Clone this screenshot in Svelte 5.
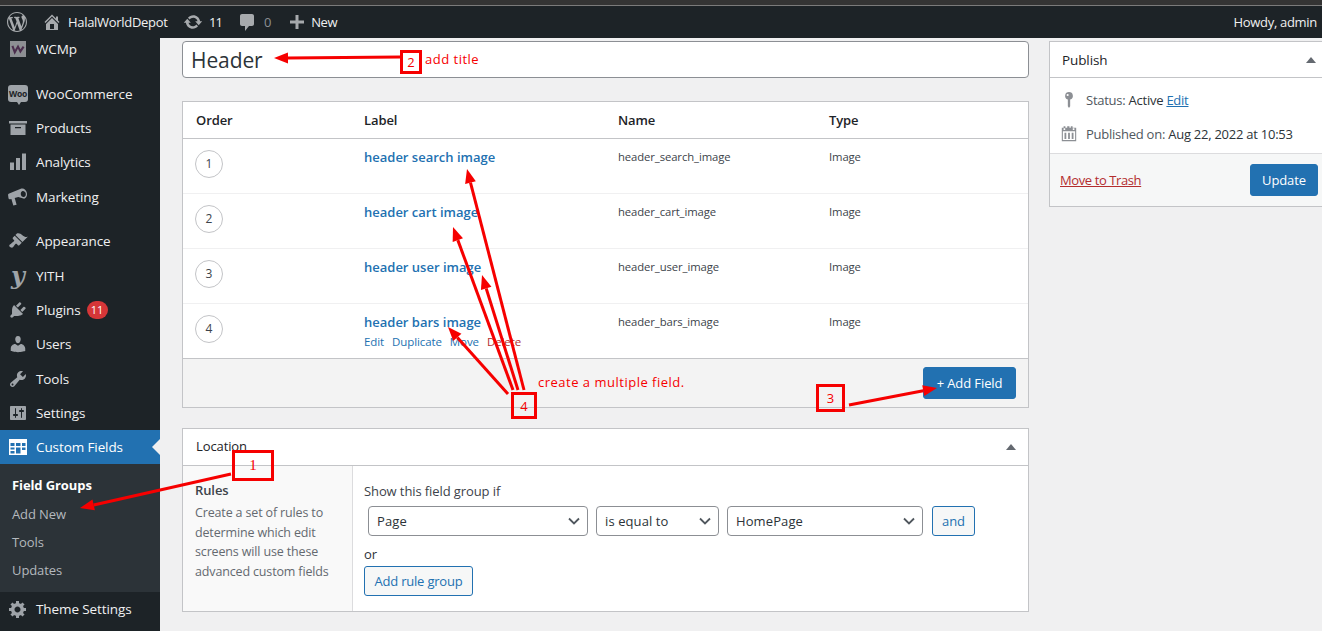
<script>
  const P = {
    wp: "M20 10c0-5.51-4.49-10-10-10C4.48 0 0 4.49 0 10c0 5.52 4.48 10 10 10 5.51 0 10-4.48 10-10zM7.78 15.37L4.37 6.22c.55-.02 1.17-.08 1.17-.08.5-.06.44-1.13-.06-1.11 0 0-1.45.11-2.37.11-.18 0-.37 0-.58-.01C4.12 2.69 6.87 1.11 10 1.11c2.33 0 4.45.87 6.05 2.34-.68-.11-1.65.39-1.65 1.58 0 .74.45 1.36.9 2.1.35.61.55 1.36.55 2.46 0 1.49-1.4 5-1.4 5l-3.03-8.37c.54-.02.82-.17.82-.17.5-.05.44-1.25-.06-1.22 0 0-1.44.12-2.38.12-.87 0-2.33-.12-2.33-.12-.5-.03-.56 1.2-.06 1.22l.92.08 1.26 3.41zM17.41 10c.24-.64.74-1.87.43-4.25.7 1.29 1.05 2.71 1.05 4.25 0 3.29-1.73 6.24-4.4 7.78.97-2.59 1.94-5.2 2.92-7.78zM6.1 18.09C3.12 16.65 1.11 13.53 1.11 10c0-1.3.23-2.48.72-3.59C3.25 10.3 4.67 14.2 6.1 18.09zm4.03-6.63l2.58 6.98c-.86.29-1.76.45-2.71.45-.79 0-1.57-.11-2.29-.33.81-2.38 1.62-4.74 2.42-7.1z",
    home: "M16 8.5l1.53 1.53-1.06 1.06L10 4.62l-6.47 6.47-1.06-1.06L10 2.5l4 4v-2h2v4zm-6-2.46l6 5.99V18H4v-5.97zM12 17v-5H8v5h4z",
    update: "M10.2 3.28c3.53 0 6.43 2.61 6.92 6h2.08l-3.5 4-3.5-4h2.32c-.45-1.97-2.21-3.45-4.32-3.45-1.45 0-2.73.71-3.54 1.78L4.95 5.66C6.23 4.2 8.11 3.28 10.2 3.28zm-.4 13.44c-3.52 0-6.43-2.61-6.92-6H.8l3.5-4c1.17 1.33 2.33 2.67 3.5 4H5.48c.45 1.97 2.21 3.45 4.32 3.45 1.45 0 2.73-.71 3.54-1.78l1.71 1.95c-1.28 1.46-3.15 2.38-5.25 2.38z",
    comment: "M5 2h10c1.1 0 2 .9 2 2v8c0 1.1-.9 2-2 2h-3l-4 5v-5H5c-1.1 0-2-.9-2-2V4c0-1.1.9-2 2-2z",
    plus: "M17 8.5v3h-5.5V17h-3v-5.5H3v-3h5.5V3h3v5.5H17z",
    archive: "M1 3h18v2.5H1zM2.500 6.500h15V17h-15zM7 9v1.200h6V9z",
    bars: "M14 1.500h4V18h-4zM8 6h4v12H8zM2 10.500h4V18H2z",
    mega: "M13.400 1.600c2.400-.7 4.700 1.200 5.400 4 .7 2.800-.3 5.500-2.600 6.200l-5.900-1.700-3.600 1 1.900 6.600-3.300.9-1.900-6.600-1.100.3c-.8.2-1.600-.3-1.800-1.100L.1 8.200c-.2-.8.3-1.600 1.100-1.800zM14.500 4.100c-1.300.4-2 2-1.600 3.600.4 1.600 1.900 2.600 3.200 2.200 1.300-.4 2-2 1.600-3.600-.4-1.600-1.900-2.600-3.200-2.200z",
    brush: "M14.48 11.060L7.410 3.990l1.500-1.500c.5-.56 2.300-.47 3.510.32 1.210.8 1.430 1.280 2.910 2.100 1.180.64 2.450 1.260 4.450.85zm-.71.71L6.700 4.700 4.930 6.470c-.39.39-.39 1.020 0 1.410l1.060 1.060c.39.39.39 1.030 0 1.420-.6.6-1.430 1.110-2.210 1.690-.35.26-.7.53-1.010.84C1.430 13.230.9 14.500 1.530 15.500c.63 1 2.620 1.600 3.380.84.31-.31.58-.66.84-1.010.58-.78 1.090-1.610 1.690-2.210.39-.39 1.020-.39 1.410 0l1.060 1.060c.39.39 1.020.39 1.410 0z",
    plugin: "M13.110 4.360L9.870 7.600 8 5.730l3.240-3.240c.35-.34 1.050-.2 1.560.32.52.51.66 1.210.31 1.550zm-8 1.770l.91-1.120 9.010 9.010-1.190.84c-.71.71-2.630 1.160-3.820 1.160H6.140L4.900 17.260c-.59.59-1.540.59-2.120 0-.59-.58-.59-1.530 0-2.120l1.240-1.240v-3.880c0-1.130.4-3.190 1.090-3.890zm7.260 3.970l3.240-3.240c.34-.35 1.040-.21 1.550.31.52.51.66 1.210.31 1.550l-3.240 3.250z",
    user: "M10 9.250c-2.270 0-2.730-3.440-2.730-3.440C7 4.020 7.820 2 9.970 2c2.160 0 2.980 2.020 2.710 3.810 0 0-.41 3.440-2.680 3.440zm0 2.570L12.720 10c2.390 0 4.520 2.330 4.520 4.530v2.490s-3.650 1.130-7.240 1.130c-3.650 0-7.240-1.130-7.240-1.130v-2.490c0-2.250 1.940-4.480 4.470-4.480z",
    tools: "M16.680 9.770c-1.340 1.340-3.300 1.670-4.950.99l-5.410 6.520c-.99.99-2.590.99-3.580 0s-.99-2.590 0-3.570l6.520-5.420c-.68-1.650-.35-3.610.99-4.950 1.280-1.280 3.120-1.620 4.720-1.060l-2.890 2.890 2.820 2.820 2.860-2.870c.53 1.580.18 3.390-1.080 4.670zM3.810 16.210c.4.39 1.040.39 1.430 0 .4-.4.4-1.040 0-1.430-.39-.4-1.030-.4-1.430 0-.39.39-.39 1.030 0 1.430z",
    sliders: "M18 16V4c0-.55-.45-1-1-1H3c-.55 0-1 .45-1 1v12c0 .55.45 1 1 1h14c.55 0 1-.45 1-1zM8 11h1c.55 0 1 .45 1 1s-.45 1-1 1H8v1.500c0 .28-.22.5-.5.5s-.5-.22-.5-.5V13H6c-.55 0-1-.45-1-1s.45-1 1-1h1V5.500c0-.28.22-.5.5-.5s.5.22.5.5V11zm5-2h-1c-.55 0-1-.45-1-1s.45-1 1-1h1V5.500c0-.28.22-.5.5-.5s.5.22.5.5V7h1c.55 0 1 .45 1 1s-.45 1-1 1h-1v5.500c0 .28-.22.5-.5.5s-.5-.22-.5-.5V9z",
    gear: "M18 12h-2.180c-.17.7-.44 1.350-.81 1.930l1.540 1.540-2.100 2.100-1.540-1.540c-.58.36-1.230.63-1.910.79V19H8v-2.180c-.68-.16-1.330-.43-1.910-.79l-1.540 1.540-2.120-2.120 1.540-1.540c-.36-.58-.63-1.230-.79-1.910H1V9.030h2.170c.16-.7.44-1.350.8-1.940L2.430 5.550l2.100-2.100 1.540 1.540c.58-.37 1.240-.64 1.930-.81V2h3v2.180c.68.16 1.330.43 1.910.79l1.540-1.540 2.120 2.120-1.540 1.540c.36.59.64 1.240.8 1.940H18V12zm-8.500 1.500c1.660 0 3-1.340 3-3s-1.340-3-3-3-3 1.340-3 3 1.340 3 3 3z",
    table: "M1 2h18v16H1zM2.500 6v3h4V6zM8 6v3h4.500V6zM14 6v3h3.500V6zM2.500 10.500v2h4v-2zM2.500 14v2.500h4V14zM8 10.500v6h4.500v-6zM14 10.500v2.500h3.500v-2.500z",
    pin: "M10 1a4.300 4.300 0 0 1 1.300 8.400V17l-1.300 2-1.300-2V9.400A4.300 4.300 0 0 1 10 1zM8.500 3.200a1.200 1.200 0 1 0 0 2.400 1.200 1.200 0 0 0 0-2.400z",
    cal: "M4 1.500h2V3h2V1.500h2.500V3h1.500V1.500h2V3H18v15H2V3h2zM3.200 7v9.800h13.600V7zM5 8.500h2v7H5zM9 8.500h2v7H9zM13 8.500h2v7h-2zM4 3.500v2h1.800v-2zM14.200 3.500v2H16v-2z"
  };

  const menuA = [
    { label: 'WooCommerce', kind: 'woo' },
    { label: 'Products', d: P.archive },
    { label: 'Analytics', d: P.bars },
    { label: 'Marketing', d: P.mega }
  ];
  const menuB = [
    { label: 'Appearance', d: P.brush },
    { label: 'YITH', kind: 'yith' },
    { label: 'Plugins', d: P.plugin, badge: '11' },
    { label: 'Users', d: P.user },
    { label: 'Tools', d: P.tools },
    { label: 'Settings', d: P.sliders }
  ];
  const rows = [
    { n: 1, label: 'header search image', name: 'header_search_image' },
    { n: 2, label: 'header cart image', name: 'header_cart_image' },
    { n: 3, label: 'header user image', name: 'header_user_image' },
    { n: 4, label: 'header bars image', name: 'header_bars_image', actions: true }
  ];

  function arrow(x1, y1, x2, y2, len = 14, half = 5.5) {
    const dx = x2 - x1, dy = y2 - y1, l = Math.hypot(dx, dy);
    const ux = dx / l, uy = dy / l;
    const bx = x2 - ux * len, by = y2 - uy * len;
    return {
      x1, y1, x2: bx, y2: by,
      head: `${x2},${y2} ${bx - uy * half},${by + ux * half} ${bx + uy * half},${by - ux * half}`
    };
  }
  const arrows = [
    arrow(400, 57, 274, 58),
    arrow(231, 474, 80, 508),
    arrow(849, 405, 937, 388),
    arrow(508, 394, 448, 327),
    arrow(513, 390, 453, 227),
    arrow(518, 390, 482, 275),
    arrow(524, 390, 467, 169)
  ];
</script>

{#snippet icon(d, cls = 'ico')}
  <svg class={cls} viewBox="0 0 20 20" aria-hidden="true"><path {d} fill-rule="evenodd" /></svg>
{/snippet}

{#snippet menuRow(item)}
  <div class="mrow">
    <span class="mico">
      {#if item.kind === 'woo'}
        <span class="woo">Woo</span>
      {:else if item.kind === 'yith'}
        <span class="yith">y</span>
      {:else}
        {@render icon(item.d)}
      {/if}
    </span>
    <span>{item.label}</span>
    {#if item.badge}<span class="badge">{item.badge}</span>{/if}
  </div>
{/snippet}

{#snippet chevron()}
  <svg class="chev" viewBox="0 0 12 8" aria-hidden="true"><path d="M1 1.500l5 5 5-5" /></svg>
{/snippet}

<div class="page">
  <div class="chrome"></div>
  <header class="bar">
    <div class="bi wp">{@render icon(P.wp, 'wpi')}</div>
    <div class="bi site">{@render icon(P.home, 'bico')}<span>HalalWorldDepot</span></div>
    <div class="bi upd">{@render icon(P.update, 'bico')}<span class="tight">11</span></div>
    <div class="bi com">{@render icon(P.comment, 'bico')}<span class="dim">0</span></div>
    <div class="bi new">{@render icon(P.plus, 'bico')}<span>New</span></div>
    <div class="howdy">Howdy, admin</div>
  </header>

  <div class="body">
    <nav class="side">
      <div class="mrow first">
        <span class="mico"><svg class="wcmp" viewBox="0 0 20 20" aria-hidden="true"><rect width="20" height="20" fill="#8d8f93"/><path d="M3 6l3 8 4-7 3 6 4-6" fill="none" stroke="#4b2d4d" stroke-width="2.600"/></svg></span>
        <span>WCMp</span>
      </div>
      <div class="sep s-a"></div>
      {#each menuA as item}{@render menuRow(item)}{/each}
      <div class="sep s-b"></div>
      {#each menuB as item}{@render menuRow(item)}{/each}
      <div class="mrow current">
        <span class="mico">{@render icon(P.table, 'ico white')}</span>
        <span>Custom Fields</span>
        <span class="notch"></span>
      </div>
      <div class="sub">
        <div class="strong">Field Groups</div>
        <div>Add New</div>
        <div>Tools</div>
        <div>Updates</div>
      </div>
      <div class="mrow">
        <span class="mico">{@render icon(P.gear)}</span>
        <span>Theme Settings</span>
      </div>
    </nav>

    <main class="main">
      <div class="col">
        <div class="title">Header</div>

        <section class="fields">
          <div class="thead grid">
            <div>Order</div><div>Label</div><div>Name</div><div>Type</div>
          </div>
          {#each rows as r}
            <div class="row grid">
              <div><span class="circle">{r.n}</span></div>
              <div class="lab">
                <div class="link">{r.label}</div>
                {#if r.actions}
                  <div class="acts"><span>Edit</span><span>Duplicate</span><span>Move</span><span class="del">Delete</span></div>
                {/if}
              </div>
              <div class="small">{r.name}</div>
              <div class="small">Image</div>
            </div>
          {/each}
          <div class="foot"><span class="btn primary addf">+ Add Field</span></div>
        </section>

        <section class="loc">
          <div class="lhead"><span>Location</span><span class="tri"></span></div>
          <div class="lbody">
            <div class="rules">
              <div class="rt">Rules</div>
              <p>Create a set of rules to determine which edit screens will use these advanced custom fields</p>
            </div>
            <div class="cond">
              <div class="show">Show this field group if</div>
              <div class="sels">
                <div class="sel s1"><span>Page</span>{@render chevron()}</div>
                <div class="sel s2"><span>is equal to</span>{@render chevron()}</div>
                <div class="sel s3"><span>HomePage</span>{@render chevron()}</div>
                <span class="btn ghost and">and</span>
              </div>
              <div class="or">or</div>
              <span class="btn ghost arg">Add rule group</span>
            </div>
          </div>
        </section>
      </div>

      <aside class="pub">
        <div class="phead"><span>Publish</span><span class="tri"></span></div>
        <div class="pbody">
          <div class="pline">{@render icon(P.pin, 'pico')}<span>Status: <b>Active</b> <u class="edit">Edit</u></span></div>
          <div class="pline">{@render icon(P.cal, 'pico')}<span>Published on: <b>Aug 22, 2022 at 10:53</b></span></div>
        </div>
        <div class="pfoot"><u class="trash">Move to Trash</u><span class="btn primary up">Update</span></div>
      </aside>
    </main>
  </div>

  <svg class="marks" viewBox="0 0 1322 631" aria-hidden="true">
    {#each arrows as a}
      <line x1={a.x1} y1={a.y1} x2={a.x2} y2={a.y2} />
      <polygon points={a.head} />
    {/each}
  </svg>
  <div class="note n1">1</div>
  <div class="note n2">2</div>
  <div class="note n3">3</div>
  <div class="note n4">4</div>
  <div class="say t2">add title</div>
  <div class="say t4">create a multiple field.</div>
</div>

<style>
  :global(body) { margin: 0; background: #f0f0f1; overflow: hidden; }
  .page {
    position: relative; width: 1322px; height: 631px; overflow: hidden;
    display: flex; flex-direction: column; background: #f0f0f1;
    font-family: "Open Sans", "Noto Sans", sans-serif; font-size: 13px; color: #3c434a;
    letter-spacing: -0.1px;
  }
  .chrome { height: 5px; background: #343434; border-bottom: 1px solid #7b7b7b; flex: none; }
  .bar { height: 32px; flex: none; background: #1d2327; color: #f0f0f1; display: flex; align-items: center; letter-spacing: -0.3px; }
  .bi { display: flex; align-items: center; }
  .wp { margin-left: 7px; }
  .site { margin-left: 15px; gap: 6px; }
  .upd { margin-left: 15px; gap: 6.500px; }
  .tight { letter-spacing: -1px; }
  .com { margin-left: 15px; gap: 7px; }
  .new { margin-left: 16px; gap: 4px; }
  .dim { color: #8c8f94; }
  .wpi { width: 20px; height: 20px; fill: #a7aaad; }
  .bico { width: 20px; height: 20px; fill: #a7aaad; }
  .howdy { margin-left: auto; margin-right: 5px; }

  .body { flex: 1; display: flex; min-height: 0; }
  .side { width: 160px; flex: none; background: #1d2327; color: #f0f0f1; font-size: 13.500px; overflow: hidden; }
  .mrow { height: 34.330px; display: flex; align-items: center; position: relative; }
  .mrow.first { margin-top: -6.600px; }
  .sep { height: 10.700px; }
  .s-a { height: 10.900px; }
  .s-b { height: 10.100px; }
  .mico { width: 36px; flex: none; display: flex; justify-content: center; }
  .ico { width: 20px; height: 20px; fill: #9ea3a8; }
  .ico.white { fill: #fff; }
  .wcmp { width: 16px; height: 16px; }
  .woo {
    position: relative; width: 20px; height: 17px; background: #9ea3a8; border-radius: 3px; color: #1d2327;
    font-size: 8.500px; font-weight: 700; line-height: 17px; text-align: center; letter-spacing: -0.3px;
  }
  .woo::after {
    content: ""; position: absolute; left: 9px; bottom: -3px; width: 0; height: 0;
    border-left: 2px solid transparent; border-right: 2px solid transparent; border-top: 3px solid #9ea3a8;
  }
  .yith { font-family: "DejaVu Serif", serif; font-style: italic; font-weight: 700; font-size: 24px; line-height: 20px; color: #9ea3a8; }
  .badge {
    margin-left: 6px; min-width: 21px; height: 18px; border-radius: 9px; background: #d63638; color: #fff;
    font-size: 11px; line-height: 18px; text-align: center;
  }
  .current { background: #2271b1; color: #fff; }
  .notch {
    position: absolute; right: 0; top: 50%; margin-top: -8px; width: 0; height: 0;
    border: 8px solid transparent; border-right-color: #f0f0f1;
  }
  .sub { background: #2c3338; padding: 7px 0 7.500px 12px; color: #b4b9be; font-size: 13px; }
  .sub div { height: 28.330px; line-height: 28.330px; }
  .sub .strong { color: #fff; font-weight: 700; }

  .main { flex: 1; display: flex; min-width: 0; padding: 3px 0 0 22px; gap: 20px; }
  .col { width: 847px; flex: none; }
  .title {
    box-sizing: border-box; height: 37px; background: #fff; border: 1px solid #8c8f94; border-radius: 4px;
    padding: 0 8px; font-size: 21px; line-height: 37px; color: #2c3338; letter-spacing: -0.1px;
  }
  .fields { margin-top: 23px; background: #fff; border: 1px solid #c3c4c7; }
  .grid { display: grid; grid-template-columns: 168px 254px 211px 1fr; padding-left: 13px; }
  .thead { height: 36px; align-items: center; border-bottom: 1px solid #c3c4c7; font-weight: 600; color: #1d2327; }
  .row { height: 55px; box-sizing: border-box; padding-top: 10px; border-bottom: 1px solid #f0f0f1; }
  .row:nth-last-child(2) { border-bottom: 1px solid #c3c4c7; }
  .circle {
    display: block; box-sizing: border-box; width: 28px; height: 28px; border: 1px solid #c3c4c7; border-radius: 50%;
    text-align: center; line-height: 26px; font-size: 12px; margin: 1px 0 0 -1px;
  }
  .link { color: #2271b1; font-weight: 600; line-height: 16px; letter-spacing: 0; }
  .acts { display: flex; gap: 8px; margin-top: 5px; font-size: 11.500px; color: #2271b1; line-height: 14px; }
  .del { color: #b32d2e; }
  .small { font-size: 11.300px; line-height: 16px; }
  .foot { height: 48px; background: #f3f3f3; display: flex; align-items: center; justify-content: flex-end; padding-right: 12px; }
  .btn {
    box-sizing: border-box; display: inline-block; height: 32px; line-height: 30px; padding: 0 13px; border-radius: 3px;
    border: 1px solid #2271b1; font-size: 13px;
  }
  .primary { background: #2271b1; color: #fff; }
  .addf { width: 93px; padding: 0; text-align: center; }
  .ghost { background: #f6f7f7; color: #2271b1; }
  .loc { margin-top: 20px; background: #fff; border: 1px solid #c3c4c7; }
  .lhead { height: 36px; display: flex; align-items: center; justify-content: space-between; padding: 0 12px 0 13px; border-bottom: 1px solid #c3c4c7; color: #1d2327; }
  .lhead > span:first-child { position: relative; top: -1px; }
  .tri { width: 0; height: 0; border: 5px solid transparent; border-bottom: 6px solid #646970; border-top: 0; }
  .lbody { display: flex; height: 145px; }
  .rules { width: 170px; flex: none; box-sizing: border-box; background: #f9f9f9; border-right: 1px solid #dcdcde; padding: 15px 12px 0; }
  .rt { font-weight: 600; color: #3c434a; line-height: 18px; }
  .rules p { margin: 4px 0 0; line-height: 19.500px; color: #646970; font-size: 12.500px; letter-spacing: -0.15px; }
  .cond { padding: 16px 0 0 11px; flex: 1; }
  .show { line-height: 18px; }
  .sels { display: flex; gap: 8px; margin: 6px 0 0 4px; align-items: center; }
  .sel {
    box-sizing: border-box; height: 30px; border: 1px solid #8c8f94; border-radius: 4px; background: #fff;
    display: flex; align-items: center; justify-content: space-between; padding: 0 7px 0 8px; color: #2c3338; letter-spacing: 0.1px;
  }
  .s1 { width: 220px; }
  .s2 { width: 123px; }
  .s3 { width: 196px; margin-right: 1px; }
  .chev { width: 12px; height: 8px; fill: none; stroke: #50575e; stroke-width: 1.800px; }
  .and { height: 30px; width: 43px; line-height: 28px; padding: 0; text-align: center; }
  .or { margin-top: 9px; line-height: 18px; color: #2c3338; }
  .arg { margin-top: 3px; height: 30px; width: 109px; line-height: 28px; padding: 0; text-align: center; letter-spacing: -0.2px; }

  .pub { width: 274px; flex: none; align-self: flex-start; background: #fff; border: 1px solid #c3c4c7; }
  .phead { box-sizing: border-box; height: 36px; display: flex; align-items: center; justify-content: space-between; padding: 0 8px 0 12px; border-bottom: 1px solid #c3c4c7; color: #1d2327; font-size: 13.500px; font-weight: 500; }
  .pbody { height: 75px; padding-top: 5px; box-sizing: border-box; }
  .pline { height: 34px; display: flex; align-items: center; padding-left: 10px; gap: 8px; color: #50575e; letter-spacing: -0.25px; }
  .pline b { font-weight: 400; color: #2c3338; }
  .pico { width: 18px; height: 18px; fill: #8c8f94; }
  .edit { color: #2271b1; }
  .pfoot { height: 53px; box-sizing: border-box; background: #f6f7f7; border-top: 1px solid #dcdcde; display: flex; align-items: center; justify-content: space-between; padding: 0 6px 0 10px; }
  .trash { color: #b32d2e; letter-spacing: -0.4px; }
  .up { height: 32px; width: 68px; padding: 0; text-align: center; }

  .marks { position: absolute; inset: 0; width: 1322px; height: 631px; pointer-events: none; }
  .marks line { stroke: #f60000; stroke-width: 3px; }
  .marks polygon { fill: #f60000; }
  .note {
    position: absolute; box-sizing: border-box; border: 3px solid #f60000; color: #f60000;
    display: flex; align-items: center; justify-content: center; font-size: 13px;
  }
  .n1 { left: 232px; top: 450px; width: 42px; height: 31px; font-family: "Liberation Serif", serif; font-size: 15px; }
  .n2 { left: 400px; top: 50px; width: 22px; height: 24px; }
  .n3 { left: 816px; top: 384px; width: 29px; height: 28px; }
  .n4 { left: 511px; top: 392px; width: 26px; height: 27px; }
  .say { position: absolute; color: #f60000; font-size: 13px; line-height: 18px; letter-spacing: 0.5px; white-space: nowrap; }
  .t2 { left: 425px; top: 50px; }
  .t4 { left: 538px; top: 373px; }
</style>
